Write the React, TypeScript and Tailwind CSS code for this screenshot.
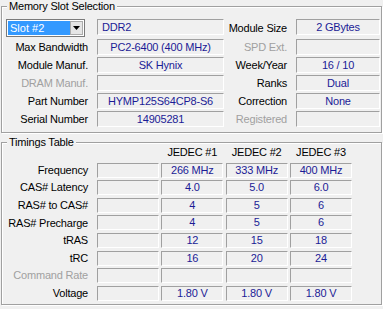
import React from "react";

const slotRows = [
  { label: "Max Bandwidth", value: "PC2-6400 (400 MHz)", rLabel: "SPD Ext.", rValue: "", rDim: true },
  { label: "Module Manuf.", value: "SK Hynix", rLabel: "Week/Year", rValue: "16 / 10" },
  { label: "DRAM Manuf.", value: "", dim: true, rLabel: "Ranks", rValue: "Dual" },
  { label: "Part Number", value: "HYMP125S64CP8-S6", rLabel: "Correction", rValue: "None" },
  { label: "Serial Number", value: "14905281", rLabel: "Registered", rValue: "", rDim: true },
];

const timings: { label: string; values: string[]; dim?: boolean }[] = [
  { label: "Frequency", values: ["", "266 MHz", "333 MHz", "400 MHz"] },
  { label: "CAS# Latency", values: ["", "4.0", "5.0", "6.0"] },
  { label: "RAS# to CAS#", values: ["", "4", "5", "6"] },
  { label: "RAS# Precharge", values: ["", "4", "5", "6"] },
  { label: "tRAS", values: ["", "12", "15", "18"] },
  { label: "tRC", values: ["", "16", "20", "24"] },
  { label: "Command Rate", values: ["", "", "", ""], dim: true },
  { label: "Voltage", values: ["", "1.80 V", "1.80 V", "1.80 V"] },
];

function Field({ children, className = "" }: { children?: React.ReactNode; className?: string }) {
  return (
    <div
      className={
        "flex items-center justify-center border border-t-[#a0a0a0] border-l-[#a0a0a0] border-b-white border-r-white text-[#1b1b96] leading-none whitespace-nowrap overflow-hidden " +
        className
      }
    >
      {children}
    </div>
  );
}

function Group({ title, className = "", children }: { title: string; className?: string; children: React.ReactNode }) {
  return (
    <div className={"relative mx-[1px] border border-[#a0a0a0] shadow-[inset_1px_1px_0_#fff,1px_1px_0_#fff] " + className}>
      <span className="absolute -top-[7px] left-[5px] bg-[#f0f0f0] px-[2px] leading-[13px] text-black">{title}</span>
      {children}
    </div>
  );
}

export default function App() {
  return (
    <div
      className="h-[309px] w-[383px] overflow-hidden bg-[#f0f0f0] pt-[6px] text-[11px] tracking-[-0.2px] text-black"
      style={{ fontFamily: '"Liberation Sans", Arial, sans-serif' }}
    >
      {/* ═══ Memory Slot Selection ═══ */}
      <Group title="Memory Slot Selection" className="h-[127px] w-[381px]">
        <div className="flex flex-col gap-[2px] pt-[12px]">
          <div className="flex h-[18px] items-start">
            <div className="ml-[4px] flex h-[18px] w-[79px] border border-[#7a7a7a] bg-white p-[1px]">
              <div className="flex flex-1 items-center bg-[#3399ff] pl-[2px] tracking-normal text-white">Slot #2</div>
              <div className="flex w-[13px] items-center justify-center border border-[#acacac] bg-[#e5e5e5]">
                <svg width="7" height="4" viewBox="0 0 7 4">
                  <path d="M0 0h7L3.5 4z" fill="#000" />
                </svg>
              </div>
            </div>
            <Field className="ml-[12px] h-[16px] w-[127px] !justify-start pl-[4px]">DDR2</Field>
            <div className="w-[63px] self-center text-right">Module Size</div>
            <Field className="ml-[9px] h-[16px] w-[84px]">2 GBytes</Field>
          </div>
          {slotRows.map((r) => (
            <div key={r.label} className="flex h-[16px] items-center">
              <div className={"ml-[1px] w-[85px] text-right " + (r.dim ? "text-[#a0a0a0]" : "")}>{r.label}</div>
              <Field className="ml-[9px] h-[16px] w-[127px]">{r.value}</Field>
              <div className={"w-[63px] text-right " + (r.rDim ? "text-[#a0a0a0]" : "")}>{r.rLabel}</div>
              <Field className="ml-[9px] h-[16px] w-[84px]">{r.rValue}</Field>
            </div>
          ))}
        </div>
      </Group>

      {/* ═══ Timings Table ═══ */}
      <Group title="Timings Table" className="mt-[9px] h-[163px] w-[381px]">
        <div className="flex flex-col gap-[2.6px] pt-[2px]">
          <div className="flex h-[15px] items-center">
            <div className="ml-[1px] w-[85px]" />
            <div className="ml-[9px] grid w-[255px] grid-cols-4 gap-x-[2.33px]">
              {["", "JEDEC #1", "JEDEC #2", "JEDEC #3"].map((h, i) => (
                <div key={i} className="text-center">{h}</div>
              ))}
            </div>
          </div>
          {timings.map((t) => (
            <div key={t.label} className="flex h-[15px] items-center">
              <div className={"ml-[1px] w-[85px] text-right " + (t.dim ? "text-[#a0a0a0]" : "")}>{t.label}</div>
              <div className="ml-[9px] grid h-[15px] w-[255px] grid-cols-4 gap-x-[2.33px]">
                {t.values.map((v, i) => (
                  <Field key={i} className="h-[15px]">{v}</Field>
                ))}
              </div>
            </div>
          ))}
        </div>
      </Group>
    </div>
  );
}
